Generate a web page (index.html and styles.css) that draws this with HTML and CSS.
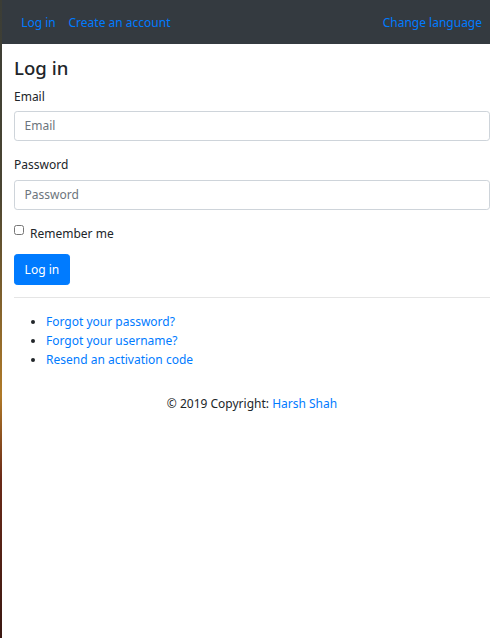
FILE: index.html
```html
<!DOCTYPE html>
<html lang="en">
<head>
<meta charset="utf-8">
<title>Log in</title>
<link rel="stylesheet" href="styles.css">
</head>
<body>
<div class="window">
  <nav class="navbar">
    <div class="nav-left">
      <a class="nav-link" href="#">Log in</a>
      <a class="nav-link" href="#">Create an account</a>
    </div>
    <a class="nav-link" href="#">Change language</a>
  </nav>
  <main class="content">
    <h4 class="title">Log in</h4>
    <form class="form">
      <div class="form-group">
        <label class="label" for="email">Email</label>
        <input class="form-control" id="email" type="text" placeholder="Email">
      </div>
      <div class="form-group">
        <label class="label" for="password">Password</label>
        <input class="form-control" id="password" type="password" placeholder="Password">
      </div>
      <div class="form-check">
        <input class="check" id="remember" type="checkbox">
        <label class="check-label" for="remember">Remember me</label>
      </div>
      <button class="btn" type="button">Log in</button>
    </form>
    <hr class="rule">
    <ul class="links">
      <li><a href="#">Forgot your password?</a></li>
      <li><a href="#">Forgot your username?</a></li>
      <li><a href="#">Resend an activation code</a></li>
    </ul>
    <footer class="footer">© 2019 Copyright: <a href="#">Harsh Shah</a></footer>
  </main>
</div>
</body>
</html>
```
FILE: styles.css
```css
html, body {
  margin: 0;
  height: 100%;
}
body {
  background: linear-gradient(180deg, #3b3d36 0%, #4a4532 30%, #b07a28 62%, #6a2a18 75%, #3a1812 100%);
  font-family: "Segoe UI", "Noto Sans", "Liberation Sans", sans-serif;
  font-size: 12px;
  line-height: 19.2px;
  color: #212529;
}
.window {
  margin-left: 2px;
  min-height: 100%;
  background: #fff;
  display: flex;
  flex-direction: column;
}
a {
  color: #007bff;
  text-decoration: none;
}
.navbar {
  height: 44px;
  box-sizing: border-box;
  padding: 1px 1.6px 0 12.8px;
  background: #343a40;
  display: flex;
  align-items: center;
  justify-content: space-between;
}
.nav-left {
  display: flex;
}
.nav-link {
  padding: 0 6.4px;
  line-height: 19.2px;
}
.content {
  padding: 0 0 0 12px;
}
.title {
  font-size: 18.6px;
  font-weight: 500;
  line-height: 23px;
  margin: 11.8px 0 6.4px;
}
.form-group {
  margin-bottom: 12.8px;
}
.label {
  display: block;
  padding-top: 1.4px;
  margin-bottom: 5px;
}
.form-control {
  display: block;
  box-sizing: border-box;
  width: 100%;
  height: 30.4px;
  padding: 4.8px 9.6px;
  font: inherit;
  color: #495057;
  background: #fff;
  border: 1px solid #ced4da;
  border-radius: 3.2px;
  margin: 0;
}
.form-control::placeholder {
  color: #6c757d;
}
.form-check {
  display: flex;
  align-items: center;
  padding-top: 1px;
  margin-bottom: 10.8px;
}
.check {
  width: 10px;
  height: 10px;
  margin: 0 6px 0 0;
  position: relative;
  top: -3px;
}
.btn {
  font: inherit;
  color: #fff;
  background: #007bff;
  border: 1px solid #007bff;
  border-radius: 3.2px;
  padding: 4.8px 9.6px;
  line-height: 19.2px;
}
.rule {
  margin: 12.8px 0;
  border: 0;
  border-top: 1px solid rgba(0, 0, 0, 0.1);
}
.links {
  margin: 0 0 12px;
  padding: 0.8px 0 0 32px;
}
.links li {
  line-height: 19px;
}
.footer {
  text-align: center;
  padding: 12.8px 0 0 0;
}
```
